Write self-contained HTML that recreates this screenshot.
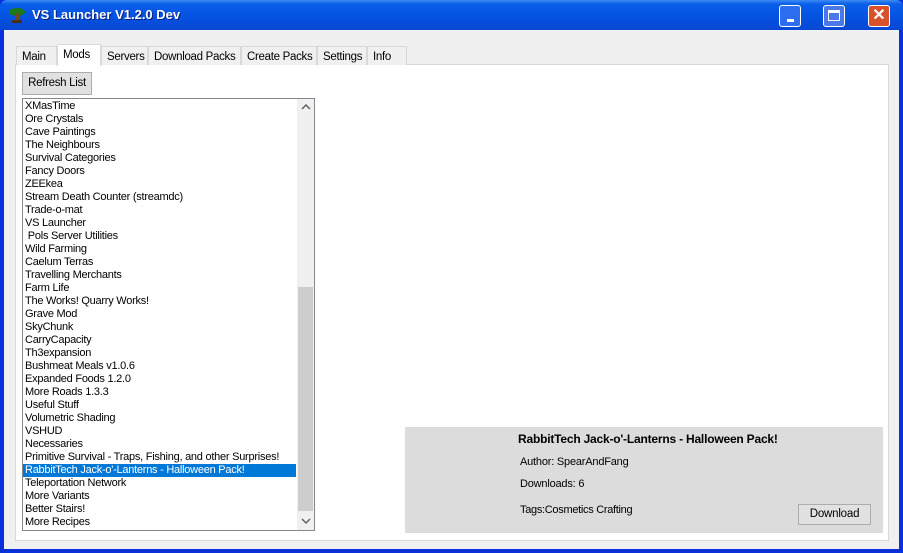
<!DOCTYPE html>
<html><head><style>
*{margin:0;padding:0;box-sizing:border-box}
body{width:903px;height:553px;overflow:hidden;font-family:"Liberation Sans",sans-serif;font-size:11px;background:#0831d9;position:relative}
.title{position:absolute;left:0;top:0;width:903px;height:30px;background:linear-gradient(#3d8cf5 0,#0a5fe8 4px,#0554e3 50%,#0747d4 100%);border-radius:7px 7px 0 0}
.title span{position:absolute;left:32px;top:7px;color:#fff;font-weight:bold;font-size:13px;text-shadow:1px 1px #0a1f80}
.client{position:absolute;left:4px;top:30px;width:895px;height:519px;background:#f0f0f0}
.tb{position:absolute;top:5px;width:22px;height:22px;border:1px solid #fff;border-radius:3px;background:#2e6cf0}
.page{position:absolute;left:15px;top:64px;width:874px;height:477px;background:#fff;border:1px solid #d9d9d9}
.tab{position:absolute;top:46px;height:19px;background:#f0f0f0;border:1px solid #d9d9d9;border-bottom:none;padding:4px 0 0 5px;font-size:11.5px;letter-spacing:-0.3px;color:#000;white-space:nowrap;overflow:hidden}
.list{position:absolute;left:22px;top:98px;width:293px;height:433px;border:1px solid #828790;background:#fff}
.row{height:13px;line-height:13px;padding-left:2px;font-size:11px;letter-spacing:-0.25px;white-space:nowrap}
.sel{background:#0078d7;color:#fff;width:273px}
</style></head><body>
<div class="title">
<svg style="position:absolute;left:8px;top:6px" width="18" height="18"><ellipse cx="9" cy="6" rx="8" ry="4" fill="#1a7a1a"/><rect x="7" y="7" width="4" height="8" fill="#6b4a20"/><rect x="4" y="14" width="10" height="3" fill="#4a3010"/></svg>
<span>VS Launcher V1.2.0 Dev</span>
<div class="tb" style="left:779px"><div style="position:absolute;left:7px;top:13px;width:7px;height:3px;background:#fff"></div></div>
<div class="tb" style="left:823px;background:#4a78e8"><div style="position:absolute;left:4px;top:4px;width:12px;height:11px;border:1px solid #fff;border-top-width:3px"></div></div>
<div class="tb" style="left:868px;background:#d8502c;color:#fff;font-size:16px;font-weight:bold;text-align:center;line-height:20px">✕</div>
</div>
<div class="client"></div>
<div class="page"></div>
<div class="tab" style="left:16px;width:41px">Main</div>
<div class="tab" style="left:57px;top:44px;height:22px;width:44px;background:#fff;z-index:2;padding-top:4px">Mods</div>
<div class="tab" style="left:101px;width:47px">Servers</div>
<div class="tab" style="left:148px;width:93px">Download Packs</div>
<div class="tab" style="left:241px;width:76px">Create Packs</div>
<div class="tab" style="left:317px;width:50px">Settings</div>
<div class="tab" style="left:367px;width:40px">Info</div>
<div style="position:absolute;left:22px;top:72px;width:70px;height:23px;background:#e1e1e1;border:1px solid #adadad;font-size:11.5px;letter-spacing:-0.3px;text-align:center;line-height:21px;white-space:nowrap">Refresh List</div>
<div class="list"><div style="padding-top:1px">
<div class="row">XMasTime</div><div class="row">Ore Crystals</div><div class="row">Cave Paintings</div><div class="row">The Neighbours</div><div class="row">Survival Categories</div><div class="row">Fancy Doors</div><div class="row">ZEEkea</div><div class="row">Stream Death Counter (streamdc)</div><div class="row">Trade-o-mat</div><div class="row">VS Launcher</div><div class="row">&nbsp;Pols Server Utilities</div><div class="row">Wild Farming</div><div class="row">Caelum Terras</div><div class="row">Travelling Merchants</div><div class="row">Farm Life</div><div class="row">The Works! Quarry Works!</div><div class="row">Grave Mod</div><div class="row">SkyChunk</div><div class="row">CarryCapacity</div><div class="row">Th3expansion</div><div class="row">Bushmeat Meals v1.0.6</div><div class="row">Expanded Foods 1.2.0</div><div class="row">More Roads 1.3.3</div><div class="row">Useful Stuff</div><div class="row">Volumetric Shading</div><div class="row">VSHUD</div><div class="row">Necessaries</div><div class="row">Primitive Survival - Traps, Fishing, and other Surprises!</div><div class="row sel">RabbitTech Jack-o'-Lanterns - Halloween Pack!</div><div class="row">Teleportation Network</div><div class="row">More Variants</div><div class="row">Better Stairs!</div><div class="row">More Recipes</div>
</div>
<div style="position:absolute;left:274px;top:0;width:17px;height:431px;background:#f0f0f0"></div>
<div style="position:absolute;left:275px;top:188px;width:15px;height:224px;background:#cdcdcd"></div>
<svg style="position:absolute;left:278px;top:4px" width="10" height="8"><path d="M1 6 L5 2 L9 6" stroke="#606060" stroke-width="1.5" fill="none"/></svg>
<svg style="position:absolute;left:278px;top:418px" width="10" height="8"><path d="M1 2 L5 6 L9 2" stroke="#606060" stroke-width="1.5" fill="none"/></svg>
</div>
<div style="position:absolute;left:405px;top:427px;width:478px;height:106px;background:#dcdcdc">
<div style="position:absolute;left:113px;top:5px;font-weight:bold;font-size:12px;letter-spacing:-0.2px">RabbitTech Jack-o'-Lanterns - Halloween Pack!</div>
<div style="position:absolute;left:115px;top:29px;letter-spacing:-0.2px">Author: SpearAndFang</div>
<div style="position:absolute;left:115px;top:51px;letter-spacing:-0.2px">Downloads: 6</div>
<div style="position:absolute;left:115px;top:77px;letter-spacing:-0.3px">Tags:Cosmetics Crafting</div>
<div style="position:absolute;left:393px;top:77px;width:73px;height:21px;background:#e1e1e1;border:1px solid #adadad;text-align:center;line-height:19px;font-size:11.5px;letter-spacing:-0.2px">Download</div>
</div>
</body></html>
